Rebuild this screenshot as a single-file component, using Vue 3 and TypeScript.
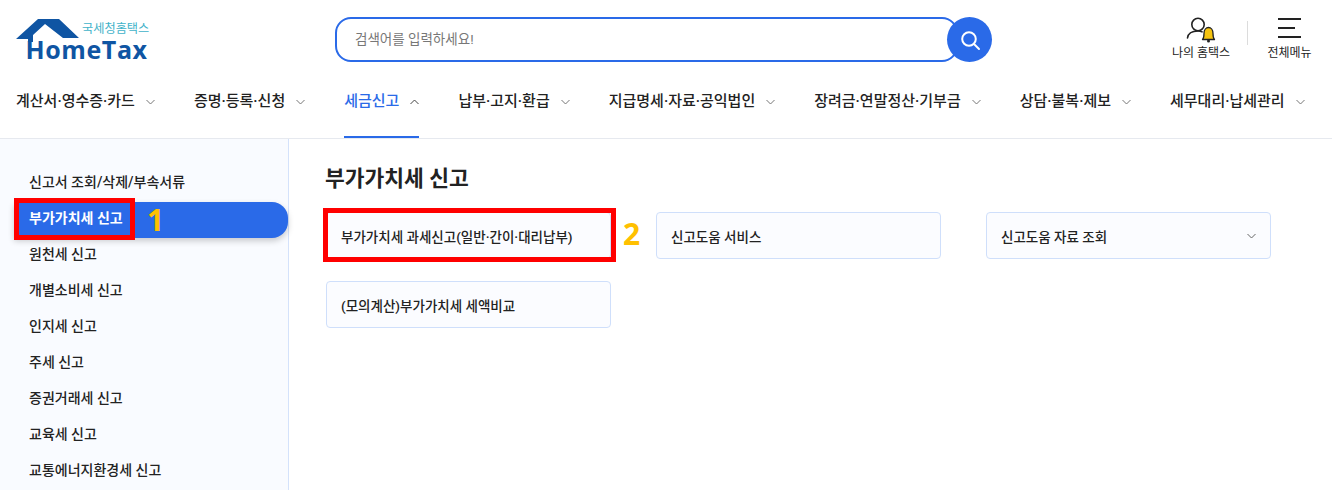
<script setup lang="ts">
const navItems = [
  { label: '계산서·영수증·카드', active: false },
  { label: '증명·등록·신청', active: false },
  { label: '세금신고', active: true },
  { label: '납부·고지·환급', active: false },
  { label: '지급명세·자료·공익법인', active: false },
  { label: '장려금·연말정산·기부금', active: false },
  { label: '상담·불복·제보', active: false },
  { label: '세무대리·납세관리', active: false },
]
const sideItems = ['신고서 조회/삭제/부속서류', '부가가치세 신고', '원천세 신고', '개별소비세 신고', '인지세 신고', '주세 신고', '증권거래세 신고', '교육세 신고', '교통에너지환경세 신고']
const cards = [
  { label: '부가가치세 과세신고(일반·간이·대리납부)', more: false },
  { label: '신고도움 서비스', more: false },
  { label: '신고도움 자료 조회', more: true },
  { label: '(모의계산)부가가치세 세액비교', more: false },
]
</script>

<template>
  <div class="page">
    <header class="header">
      <div class="top">
        <div class="logo">
          <svg class="logo-mark" width="136" height="44" viewBox="0 0 136 44">
            <path d="M0 21 L22 1 H43 L63 20 H47 L29 6 L17 17 V24 H12 V21 Z" fill="#0f55a3" />
          </svg>
          <span class="logo-sub">국세청홈택스</span>
          <span class="logo-main">HomeTax</span>
        </div>
        <div class="search">
          <div class="search-box">검색어를 입력하세요!</div>
          <button class="search-btn" type="button" aria-label="검색">
            <svg width="22" height="22" viewBox="0 0 22 22" fill="none" stroke="#fff" stroke-width="2">
              <circle cx="10" cy="10" r="6.8" />
              <path d="M15 15 L20 20" stroke-linecap="round" />
            </svg>
          </button>
        </div>
        <div class="utils">
          <div class="util util-my">
            <svg width="30" height="28" viewBox="0 0 30 28" fill="none">
              <circle cx="12" cy="8.500" r="6.200" stroke="#222" stroke-width="1.600" />
              <path d="M1.500 22 C2 18 5.500 15 12 15 C13.500 15 15 15.300 16 15.800" stroke="#222" stroke-width="1.600" stroke-linecap="round" />
              <path d="M16.500 23.500 C18 22 18 20 18 17.500 C18 14 20 11.500 22.500 11.500 C25 11.500 27 14 27 17.500 C27 20 27 22 28.500 23.500 Z" fill="#f6c40f" stroke="#222" stroke-width="1.300" stroke-linejoin="round" />
              <circle cx="22.500" cy="25" r="1.500" fill="#222" />
            </svg>
            <span>나의 홈택스</span>
          </div>
          <div class="divider"></div>
          <div class="util util-menu">
            <svg width="23" height="21" viewBox="0 0 23 21" fill="none" stroke="#222" stroke-width="2">
              <path d="M0 1 H23" />
              <path d="M0 10 H17" />
              <path d="M0 19 H23" />
            </svg>
            <span>전체메뉴</span>
          </div>
        </div>
      </div>
      <nav class="nav">
        <div v-for="item in navItems" :key="item.label" class="nav-item" :class="{ active: item.active }">
          <span>{{ item.label }}</span>
          <svg width="9" height="6" viewBox="0 0 9 6" fill="none" stroke-width="1" :stroke="item.active ? '#444' : '#777'">
            <path :d="item.active ? 'M0.500 5 L4.500 1 L8.500 5' : 'M0.500 1 L4.500 5 L8.500 1'" />
          </svg>
        </div>
      </nav>
    </header>

    <div class="body">
      <aside class="side">
        <div v-for="(name, i) in sideItems" :key="name" class="side-item" :class="{ current: i === 1 }">{{ name }}</div>
        <div class="mark mark-side"></div>
        <span class="num num-1">1</span>
      </aside>
      <main class="main">
        <h1 class="title">부가가치세 신고</h1>
        <div class="cards">
          <div v-for="card in cards" :key="card.label" class="card">
            <span>{{ card.label }}</span>
            <svg v-if="card.more" width="9" height="6" viewBox="0 0 9 6" fill="none" stroke="#666" stroke-width="1">
              <path d="M0.500 1 L4.500 5 L8.500 1" />
            </svg>
          </div>
          <div class="mark mark-card"></div>
          <span class="num num-2">2</span>
        </div>
      </main>
    </div>
  </div>
</template>

<style>
html, body { margin: 0; background: #fff; }
</style>

<style scoped>
.page {
  width: 1332px;
  height: 490px;
  overflow: hidden;
  font-family: Roboto, "Noto Sans CJK KR", "Noto Sans", sans-serif;
  color: #222;
  display: flex;
  flex-direction: column;
}
.header {
  height: 138px;
  border-bottom: 1px solid #e6e9ef;
  flex: none;
}
.top {
  height: 76px;
  display: flex;
  align-items: flex-start;
  position: relative;
}
.logo {
  width: 136px;
  height: 44px;
  margin: 18px 0 0 16px;
  position: relative;
  flex: none;
}
.logo-mark { position: absolute; left: 0; top: 0; }
.logo-sub {
  position: absolute;
  left: 66px;
  top: 2px;
  font-size: 12.2px;
  line-height: 18px;
  color: #3fb2c9;
  white-space: nowrap;
}
.logo-main {
  position: absolute;
  left: 9.500px;
  top: 16px;
  font-family: "Open Sans", sans-serif;
  font-weight: 700;
  font-size: 25px;
  line-height: 30px;
  color: #0f55a3;
  letter-spacing: 0.6px;
  white-space: nowrap;
}
.search {
  margin: 17px 0 0 183px;
  display: flex;
  align-items: center;
  width: 657px;
  flex: none;
}
.search-box {
  width: 623px;
  height: 45px;
  box-sizing: border-box;
  border: 2px solid #2a6ae8;
  border-radius: 16px;
  padding-left: 18px;
  font-size: 13.500px;
  line-height: 41px;
  color: #777;
}
.search-btn {
  width: 45px;
  height: 45px;
  margin-left: -11px;
  border: 0;
  border-radius: 50%;
  background: #2a6ae8;
  padding: 0;
  display: flex;
  align-items: center;
  justify-content: center;
  position: relative;
}
.utils {
  margin: 16px 0 0 180px;
  display: flex;
  align-items: flex-start;
}
.util {
  display: flex;
  flex-direction: column;
  align-items: center;
  font-size: 12px;
  line-height: 16px;
  white-space: nowrap;
}
.util svg { flex: none; }
.util-my { width: 58px; }
.util-my svg { margin-bottom: 1px; }
.divider {
  width: 1px;
  height: 24px;
  background: #dcdcdc;
  margin: 5px 16px 0 17px;
}
.util-menu { width: 51px; padding-top: 2px; }
.util-menu svg { margin-bottom: 6px; }
.nav {
  height: 62px;
  display: flex;
  padding-left: 16px;
}
.nav-item {
  height: 62px;
  box-sizing: border-box;
  display: flex;
  align-items: flex-start;
  gap: 11px;
  padding-top: 13px;
  margin-right: 39px;
  font-size: 15px;
  line-height: 24px;
  font-weight: 500;
  white-space: nowrap;
  position: relative;
}
.nav-item svg { margin-top: 10px; }
.nav-item.active { color: #2a6ae8; border-bottom: 2px solid #2a6ae8; }
.body {
  flex: 1;
  display: flex;
  min-height: 0;
}
.side {
  width: 289px;
  box-sizing: border-box;
  background: #f9fbff;
  border-right: 1px solid #d4e2fb;
  padding: 25px 0 0 14px;
  position: relative;
  flex: none;
}
.side-item {
  height: 36px;
  line-height: 36px;
  padding-left: 15px;
  font-size: 14px;
  font-weight: 500;
  color: #222;
  white-space: nowrap;
}
.side-item.current {
  margin-top: 2px;
  margin-bottom: -2px;
  line-height: 32px;
  background: #2a6ae8;
  color: #fff;
  font-weight: 700;
  border-radius: 0 16px 16px 0;
  box-shadow: 0 3px 6px rgba(0, 0, 0, 0.2);
}
.mark {
  position: absolute;
  box-sizing: border-box;
  border: 5px solid #f00;
  pointer-events: none;
}
.mark-side { left: 14px; top: 59px; width: 121px; height: 42px; }
.num {
  position: absolute;
  font-family: "Open Sans", sans-serif;
  font-weight: 700;
  font-size: 30px;
  line-height: 36px;
  color: #ffc000;
}
.num-1 { left: 147px; top: 63px; }
.main {
  flex: 1;
  padding: 25px 0 0 36px;
  position: relative;
}
.title {
  margin: 0 0 19px;
  font-size: 21.500px;
  line-height: 29px;
  font-weight: 700;
  color: #222;
}
.cards {
  display: grid;
  grid-template-columns: repeat(3, 285px);
  grid-auto-rows: 47px;
  column-gap: 45px;
  row-gap: 22px;
  margin-left: 1px;
  position: relative;
}
.card {
  box-sizing: border-box;
  border: 1px solid #cfdffb;
  border-radius: 4px;
  background: #fbfcff;
  padding: 0 14px;
  font-size: 13.500px;
  font-weight: 500;
  display: flex;
  align-items: center;
  justify-content: space-between;
  white-space: nowrap;
}
.mark-card { left: -3px; top: -4px; width: 293px; height: 54px; }
.num-2 { left: 297px; top: 4px; }
</style>
